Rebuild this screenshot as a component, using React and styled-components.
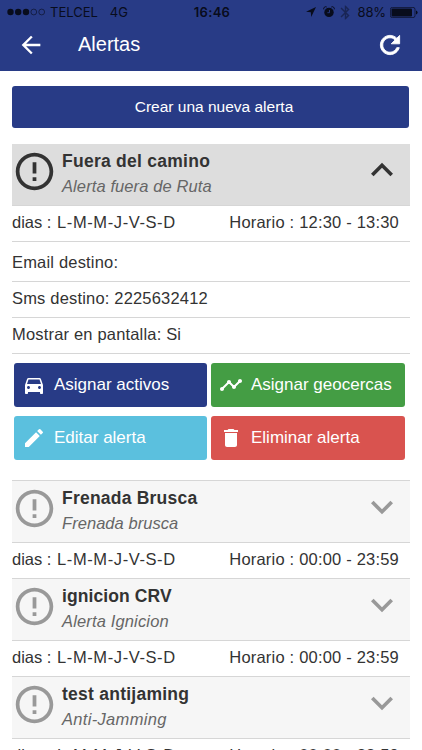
import React from "react";
import styled, { createGlobalStyle } from "styled-components";
import {
  MdBluetooth,
  MdDelete,
  MdDirectionsCar,
  MdEdit,
  MdErrorOutline,
  MdExpandLess,
  MdExpandMore,
  MdTimeline,
} from "react-icons/md";
import { IoMdArrowBack, IoMdRefresh } from "react-icons/io";

const COLORS = {
  primary: "#283b86",
  info: "#5bc0de",
  success: "#449d44",
  danger: "#d9534f",
  text: "#333",
  muted: "#666",
  line: "#d6d6d6",
};

const alerts = [
  { name: "Frenada Brusca", type: "Frenada brusca", gap: 0.22, typeGap: 0.05 },
  { name: "ignicion CRV", type: "Alerta Ignicion", gap: 0.1, typeGap: 0.15 },
  { name: "test antijaming", type: "Anti-Jamming", gap: 0.25, typeGap: 0.32 },
];

const StatusBar = () => (
  <Status>
    <Carrier>
      <svg width="39" height="8" viewBox="0 0 39 8">
        <circle cx="3.5" cy="4" r="3.2" />
        <circle cx="11.2" cy="4" r="3.2" />
        <circle cx="19" cy="4" r="3.2" />
        <circle cx="26.8" cy="4" r="2.9" fill="none" stroke="#080c1c" strokeWidth=".6" />
        <circle cx="34.7" cy="4" r="2.9" fill="none" stroke="#080c1c" strokeWidth=".6" />
      </svg>
      <CarrierName>TELCEL</CarrierName>
      <span>4G</span>
    </Carrier>
    <Clock>16:46</Clock>
    <Indicators>
      <svg width="10" height="10" viewBox="0 0 10 10">
        <path d="M10 0 5.2 10 4.8 5.2 0 4.8z" />
      </svg>
      <AlarmIcon width="12" height="12" viewBox="0 0 12 12">
        <circle cx="6" cy="6.4" r="4.7" />
        <path d="M.8 3.4A2 2 0 0 1 3.7 1M11.2 3.4A2 2 0 0 0 8.3 1" fill="none" stroke="#080c1c" />
        <path d="M6.5 4v2.7H4.4" fill="none" stroke="#283b86" strokeWidth=".9" />
      </AlarmIcon>
      <BluetoothIcon size={17} />
      <Percent>88%</Percent>
      <svg width="28" height="11" viewBox="0 0 28 11">
        <rect x=".4" y=".4" width="24.6" height="10.2" rx="2" fill="none" stroke="#080c1c" strokeWidth=".7" />
        <rect x="1.5" y="1.5" width="20.5" height="8" rx="1" />
        <path d="M26 3.6q1.6.4 1.6 1.9T26 7.4z" />
      </svg>
    </Indicators>
  </Status>
);

const AlertHeader = ({ name, type, gap, typeGap, open }) => (
  <AlertTop $open={open}>
    <MdErrorOutline size={45} />
    <AlertText>
      <AlertName $gap={gap}>{name}</AlertName>
      <AlertType $gap={typeGap}>{type}</AlertType>
    </AlertText>
    <Chevron>
      {open ? <MdExpandLess size={44} /> : <MdExpandMore size={44} />}
    </Chevron>
  </AlertTop>
);

const Schedule = ({ hours }) => (
  <ScheduleRow>
    <span>
      dias : <Days>L-M-M-J-V-S-D</Days>
    </span>
    <Hours>Horario : {hours}</Hours>
  </ScheduleRow>
);

const App = () => {
  return (
    <Screen>
      <GlobalStyle />
      <Header>
        <StatusBar />
        <Toolbar>
          <IoMdArrowBack size={28} />
          <Title>Alertas</Title>
          <RefreshIcon size={28} />
        </Toolbar>
      </Header>

      <Content>
        <CreateButton>Crear una nueva alerta</CreateButton>

        <AlertHeader open name="Fuera del camino" type="Alerta fuera de Ruta" gap={0.26} typeGap={0.1} />
        <Schedule hours="12:30 - 13:30" />
        <DetailRow $tall>Email destino:</DetailRow>
        <DetailRow>Sms destino: 2225632412</DetailRow>
        <DetailRow $last>Mostrar en pantalla: Si</DetailRow>

        <Actions>
          <ActionButton $color={COLORS.primary}>
            <MdDirectionsCar size={24} />
            Asignar activos
          </ActionButton>
          <ActionButton $color={COLORS.success}>
            <MdTimeline size={24} />
            Asignar geocercas
          </ActionButton>
          <ActionButton $color={COLORS.info}>
            <MdEdit size={24} />
            Editar alerta
          </ActionButton>
          <ActionButton $color={COLORS.danger}>
            <MdDelete size={24} />
            Eliminar alerta
          </ActionButton>
        </Actions>

        {alerts.map((alert) => (
          <React.Fragment key={alert.name}>
            <AlertHeader {...alert} />
            <Schedule hours="00:00 - 23:59" />
          </React.Fragment>
        ))}
      </Content>
    </Screen>
  );
};

export default App;

const GlobalStyle = createGlobalStyle`
  * {
    box-sizing: border-box;
  }

  body {
    margin: 0;
    background: #fff;
  }

  svg {
    display: block;
    flex-shrink: 0;
  }
`;

const Screen = styled.div`
  width: 422px;
  height: 750px;
  overflow: hidden;
  font-family: "Liberation Sans", Arial, sans-serif;
  font-size: 16.5px;
  color: ${COLORS.text};
  white-space: nowrap;
`;

const Header = styled.header`
  height: 71px;
  background: ${COLORS.primary};
`;

const Status = styled.div`
  display: grid;
  grid-template-columns: 1fr auto 1fr;
  align-items: center;
  height: 23px;
  padding: 1px 7px 0;
  font-family: Inter, Roboto, sans-serif;
  font-size: 13px;
  color: #080c1c;
  fill: #080c1c;
`;

const Carrier = styled.div`
  display: flex;
  align-items: center;
`;

const CarrierName = styled.span`
  margin: 0 12px 0 4px;
`;

const Clock = styled.div`
  padding-left: 2px;
  font-weight: 600;
  letter-spacing: 0.3px;
`;

const Indicators = styled.div`
  display: flex;
  align-items: center;
  justify-content: flex-end;
  margin-right: -3px;
`;

const AlarmIcon = styled.svg`
  margin-left: 7px;
`;

const BluetoothIcon = styled(MdBluetooth)`
  margin: 0 3px 0 2px;
  opacity: 0.45;
`;

const Percent = styled.span`
  margin-right: 4px;
  letter-spacing: -0.1px;
`;

const Toolbar = styled.div`
  display: flex;
  align-items: center;
  height: 44px;
  padding: 0 18px 0 17px;
  color: #fff;
`;

const RefreshIcon = styled(IoMdRefresh)`
  stroke: #fff;
  stroke-width: 16px;
`;

const Title = styled.h1`
  flex: 1;
  margin: 0 0 2px 33px;
  font-size: 20px;
  font-weight: 400;
`;

const Content = styled.main`
  padding: 15px 12px 0;
`;

const CreateButton = styled.button`
  display: block;
  width: 397px;
  height: 42px;
  margin: 0 0 16px;
  padding: 0 0 0 7px;
  border: 0;
  border-radius: 3px;
  background: ${COLORS.primary};
  color: #fff;
  font-family: inherit;
  font-size: 15.5px;
`;

const AlertTop = styled.div`
  display: flex;
  height: ${({ $open }) => ($open ? "61px" : "62px")};
  padding: 5px 6px 0 0;
  border-top: ${({ $open }) => ($open ? "0" : `1px solid ${COLORS.line}`)};
  background: ${({ $open }) => ($open ? "#ddd" : "#f6f6f6")};

  svg {
    color: ${({ $open }) => ($open ? COLORS.text : "#999")};
  }
`;

const AlertText = styled.div`
  flex: 1;
  padding-left: 5px;
`;

const AlertName = styled.div`
  height: 24px;
  font-size: 17.5px;
  font-weight: 700;
  line-height: 24px;
  letter-spacing: ${({ $gap }) => $gap}px;
`;

const AlertType = styled.div`
  height: 26px;
  font-size: 16.5px;
  font-style: italic;
  line-height: 26px;
  letter-spacing: ${({ $gap }) => $gap}px;
  color: ${COLORS.muted};
`;

const Chevron = styled.div`
  margin-top: -1px;
`;

const ScheduleRow = styled.div`
  display: flex;
  justify-content: space-between;
  height: 36px;
  padding-right: 11px;
  border-top: 1px solid ${COLORS.line};
  line-height: 33px;
`;

const Days = styled.span`
  margin-left: 1px;
  letter-spacing: 0.6px;
`;

const Hours = styled.span`
  letter-spacing: 0.2px;
`;

const DetailRow = styled.div`
  height: ${({ $tall, $last }) => ($tall ? "40px" : $last ? "37px" : "36px")};
  padding-top: ${({ $tall }) => ($tall ? "4px" : "0")};
  border-top: 1px solid ${COLORS.line};
  border-bottom: ${({ $last }) => ($last ? `1px solid ${COLORS.line}` : "0")};
  line-height: 33px;
  letter-spacing: 0.18px;
`;

const Actions = styled.div`
  display: grid;
  grid-template-columns: 193px 194px;
  gap: 9px 4px;
  padding: 9px 2px 20px;
`;

const ActionButton = styled.button`
  display: flex;
  align-items: center;
  gap: 8px;
  height: 44px;
  padding: 0 8px;
  border: 0;
  border-radius: 3px;
  background: ${({ $color }) => $color};
  color: #fff;
  font-family: inherit;
  font-size: 17px;
`;
